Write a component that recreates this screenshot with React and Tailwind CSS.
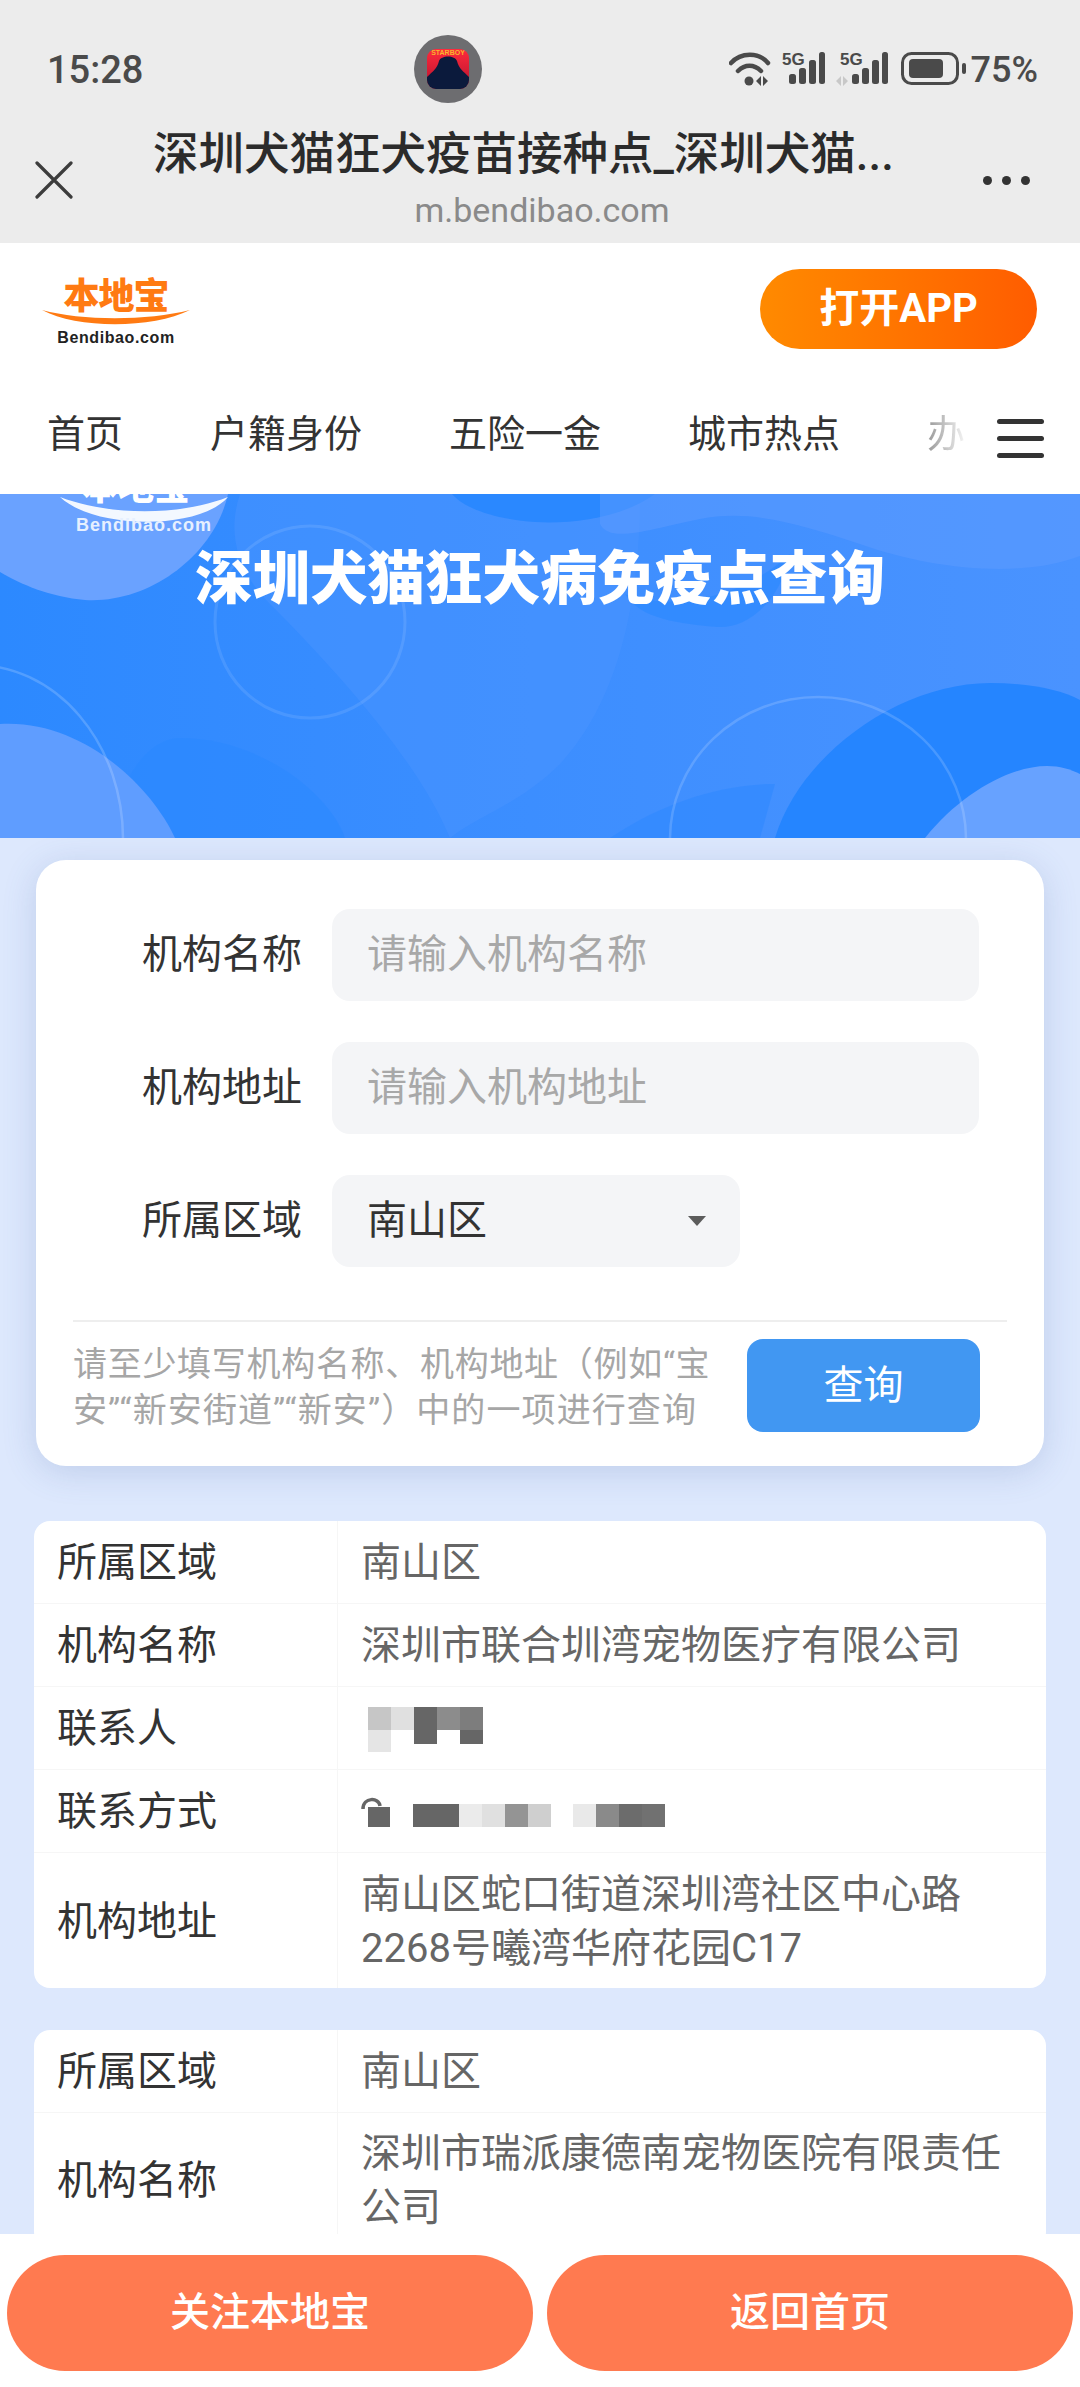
import React from "react";

function Signal({ x = 0 }) {
  return (
    <g transform={`translate(${x} 0)`}>
      <rect x="0" y="22" width="7" height="10" rx="2.500" />
      <rect x="10" y="16" width="7" height="16" rx="2.500" />
      <rect x="20" y="8" width="7" height="24" rx="2.500" />
      <rect x="30" y="0" width="6" height="32" rx="2.500" />
    </g>
  );
}

function StatusIcons() {
  return (
    <svg width="240" height="36" viewBox="0 0 240 36" fill="#4a4a4a">
      <g fill="none" stroke="#4a4a4a" strokeWidth="4.500" strokeLinecap="round">
        <path d="M2 11 C12 0 30 0 39 11" />
        <path d="M9 19 C16 12 25 12 32 19" />
      </g>
      <circle cx="20" cy="29" r="4.500" />
      <path d="M27 29 l5 -5 v10z M34 24 l5 5 l-5 5z" />
      <g transform="translate(60 0)"><Signal /></g>
      <g transform="translate(123 0)"><Signal /></g>
      <path d="M107 29 l5 -5 v10z M114 24 l5 5 l-5 5z" fill="#c8c8c8" />
      <rect x="173.500" y="1.500" width="55" height="30" rx="9" fill="none" stroke="#4a4a4a" strokeWidth="3" />
      <rect x="180" y="7" width="34" height="19" rx="4" />
      <rect x="233" y="11" width="4" height="11" rx="2" />
    </svg>
  );
}

function Row({ label, children, h = "h-[83px]", last }) {
  return (
    <div className={`flex ${h} ${last ? "" : "border-b border-[#f6f6f6]"}`}>
      <div className="flex w-[304px] shrink-0 items-center border-r border-[#f6f6f6] pl-[23px] pt-[2px] text-[40px] text-[#333]">
        {label}
      </div>
      <div className="flex min-w-0 flex-1 items-center pl-[23px] pr-[24px] pt-[2px] text-[40px] leading-[54px] text-[#666]">
        {children}
      </div>
    </div>
  );
}

function Cells({ items }) {
  return (
    <div className="flex items-start">
      {items.map((c, i) => (
        <div key={i} className="w-[23px]" style={{ height: c[1], background: c[0] }} />
      ))}
    </div>
  );
}

function Field({ label, children, w = "w-[647px]" }) {
  return (
    <div className="flex items-center">
      <div className="w-[266px] text-right text-[40px] text-[#333]">{label}</div>
      <div className={`ml-[30px] flex h-[92px] items-center rounded-[18px] bg-[#f4f5f7] px-[35px] text-[40px] ${w}`}>
        {children}
      </div>
    </div>
  );
}

function Banner() {
  return (
    <div className="relative h-[344px] overflow-hidden bg-gradient-to-r from-[#2c89ff] to-[#4a93ff]">
      <svg className="absolute inset-0" width="1080" height="344" viewBox="0 0 1080 344">
        <path d="M240 0 H640 C640 90 625 200 560 270 C520 310 480 320 450 344 C420 270 340 180 270 110 C230 70 230 30 240 0Z" fill="#4c94ff" opacity="0.45" />
        <path d="M0 0 H228 C215 60 150 110 85 106 C50 103 20 90 0 78Z" fill="#6aa2ff" />
        <path d="M452 0 H655 C620 25 570 30 535 28 C495 25 465 15 452 0Z" fill="#2a88ff" />
        <path d="M600 0 H1080 V62 C1020 85 930 75 860 50 C800 30 750 15 700 25 C650 35 610 50 600 30Z" fill="#5d9cff" opacity="0.5" />
        <path d="M625 100 C665 115 735 110 790 60 C780 110 745 135 718 133 C680 130 640 125 625 100Z" fill="#2a88ff" opacity="0.6" />
        <path d="M110 344 C120 280 150 244 180 244 C260 244 330 300 345 344Z" fill="#2a88ff" opacity="0.55" />
        <path d="M0 230 C80 225 150 290 175 344 H0Z" fill="#5f9dff" />
        <path d="M775 344 C800 260 900 189 990 189 C1025 189 1060 195 1080 206 V344Z" fill="#2585ff" />
        <path d="M610 344 C660 310 720 290 775 290 L760 344Z" fill="#2f89ff" opacity="0.6" />
        <path d="M925 344 C960 300 1010 272 1047 272 C1060 272 1070 275 1080 280 V344Z" fill="#67a2ff" />
        <ellipse cx="310" cy="128" rx="95" ry="96" fill="none" stroke="#ffffff" strokeOpacity="0.1" strokeWidth="3" />
        <ellipse cx="818" cy="345" rx="148" ry="142" fill="none" stroke="#ffffff" strokeOpacity="0.16" strokeWidth="2.500" />
        <ellipse cx="-25" cy="345" rx="148" ry="174" fill="none" stroke="#ffffff" strokeOpacity="0.18" strokeWidth="2.500" />
        <path d="M60 3 C110 22 180 22 228 3 C200 36 95 36 60 3Z" fill="#ffffff" opacity="0.92" />
      </svg>
      <div className="absolute left-[82px] top-[-26px] text-[36px] font-black leading-[40px] text-white">本地宝</div>
      <div className="absolute left-[76px] top-[21px] font-['Liberation_Sans'] text-[18px] font-bold leading-[20px] tracking-[1px] text-[#e6f0ff]">
        Bendibao.com
      </div>
      <div className="relative pt-[52px] text-center text-[57.500px] font-black leading-[68px] text-white">
        深圳犬猫狂犬病免疫点查询
      </div>
    </div>
  );
}

export default function App() {
  return (
    <div className="relative h-[2387px] w-[1080px] overflow-hidden bg-[#dde8fd] font-['Roboto','Noto_Sans_CJK_SC',sans-serif]">
      {/* system + browser chrome */}
      <div className="h-[243px] bg-[#ececec]">
        <div className="relative flex h-[128px] items-center justify-between pl-[47px] pr-[42px] pt-[12px]">
          <div className="text-[38px] font-medium text-[#4a4a4a]">15:28</div>
          <div className="absolute left-[414px] top-[35px] flex h-[68px] w-[68px] items-center justify-center rounded-full bg-[#6d6d70]">
            <div className="relative h-[40px] w-[42px] overflow-hidden rounded-[9px] bg-gradient-to-b from-[#ff2a3c] to-[#b3122e]">
              <svg className="absolute inset-0" width="42" height="40" viewBox="0 0 42 40">
                <path d="M0 40 V28 C6 22 10 20 12 12 C14 6 28 6 30 12 C32 20 36 22 42 28 V40Z" fill="#0b1a3c" />
              </svg>
              <div className="absolute left-0 top-0 w-full whitespace-nowrap text-center font-['Liberation_Sans'] text-[7px] font-bold leading-[8px] text-[#f7b52c]">
                STARBOY
              </div>
            </div>
          </div>
          <div className="flex items-center">
            <StatusIcons />
            <div className="ml-[2px] text-[36px] font-medium text-[#4a4a4a]">75%</div>
          </div>
          <div className="absolute left-[782px] top-[50px] font-['Liberation_Sans'] text-[17px] font-bold leading-[20px] text-[#4a4a4a]">5G</div>
          <div className="absolute left-[840px] top-[50px] font-['Liberation_Sans'] text-[17px] font-bold leading-[20px] text-[#4a4a4a]">5G</div>
        </div>
        <div className="flex items-center pl-[34px] pr-[50px]">
          <svg width="40" height="38" viewBox="0 0 40 38" fill="none" stroke="#3c3c3c" strokeWidth="3.200" strokeLinecap="round">
            <path d="M3 2 L37 36 M37 2 L3 36" />
          </svg>
          <div className="min-w-0 flex-1">
            <div className="whitespace-nowrap pl-[79px] text-[45.500px] font-medium leading-[54px] text-[#2b2b2b]">
              深圳犬猫狂犬疫苗接种点_深圳犬猫...
            </div>
            <div className="mt-[6px] pl-[27px] text-center text-[34px] leading-[44px] text-[#8a8a8a]">m.bendibao.com</div>
          </div>
          <div className="flex gap-[10px]">
            <div className="h-[9px] w-[9px] rounded-full bg-[#333]" />
            <div className="h-[9px] w-[9px] rounded-full bg-[#333]" />
            <div className="h-[9px] w-[9px] rounded-full bg-[#333]" />
          </div>
        </div>
      </div>

      {/* site header */}
      <div className="bg-white">
        <div className="flex h-[140px] items-center justify-between pl-[42px] pr-[43px] pt-[28px]">
          <div className="relative h-[72px] w-[148px] -translate-y-[13px]">
            <div className="text-center text-[36px] font-black leading-[38px] tracking-[-1px] text-[#ff7a12]">本地宝</div>
            <svg className="absolute left-0 top-[31px]" width="148" height="20" viewBox="0 0 148 20">
              <path d="M0 1 C40 12 105 12 148 1 C110 20 35 20 0 1Z" fill="#ff7a12" />
            </svg>
            <div className="absolute left-0 top-[51px] w-full text-center font-['Liberation_Sans'] text-[16px] font-bold leading-[18px] tracking-[0.6px] text-[#222]">
              Bendibao.com
            </div>
          </div>
          <div className="flex h-[80px] w-[277px] -translate-y-[18px] items-center justify-center rounded-full bg-gradient-to-r from-[#ff8a00] to-[#ff5c00] text-[40px] font-bold text-white">
            打开APP
          </div>
        </div>
        <div className="flex h-[111px] items-center pl-[47px] pr-[36px]">
          <div className="relative mb-[8px] flex flex-1 gap-[87px] whitespace-nowrap text-[38px] text-[#333]">
            <span>首页</span>
            <span>户籍身份</span>
            <span>五险一金</span>
            <span>城市热点</span>
            <span className="bg-gradient-to-r from-[#999] to-[#f4f4f4] bg-clip-text text-transparent">办</span>
          </div>
          <div className="ml-[10px] flex w-[47px] flex-col gap-[12px]">
            <div className="h-[5px] rounded-full bg-[#333]" />
            <div className="h-[5px] rounded-full bg-[#333]" />
            <div className="h-[5px] rounded-full bg-[#333]" />
          </div>
        </div>
      </div>

      <Banner />

      {/* search card */}
      <div className="px-[36px] pt-[22px]">
        <div className="h-[606px] rounded-[30px] bg-white pt-[49px] shadow-[0_6px_34px_rgba(70,100,160,0.2)]">
          <div className="flex flex-col gap-[41px]">
            <Field label="机构名称"><span className="text-[#a8a8a8]">请输入机构名称</span></Field>
            <Field label="机构地址"><span className="text-[#a8a8a8]">请输入机构地址</span></Field>
            <Field label="所属区域" w="w-[408px]">
              <span className="flex-1 text-[#333]">南山区</span>
              <svg width="20" height="12" viewBox="0 0 20 12" className="mr-[-2px]"><path d="M1 1 H19 L10 11Z" fill="#5c5c5c" /></svg>
            </Field>
          </div>
          <div className="mx-[37px] mt-[53px] h-[2px] bg-[#eeeeee]" />
          <div className="flex items-start pl-[37px] pr-[64px] pt-[17px]">
            <div className="w-[650px] whitespace-nowrap pt-[2px] text-[34px] leading-[46px] tracking-[0.7px] text-[#a6a6a6]">
              请至少填写机构名称、机构地址（例如“宝<br /><span className="tracking-[1.100px]">安”“新安街道”“新安”）中的一项进行查询</span>
            </div>
            <div className="ml-auto flex h-[93px] w-[233px] items-center justify-center rounded-[16px] bg-[#4197f2] text-[40px] text-white">
              查询
            </div>
          </div>
        </div>
      </div>

      {/* result tables */}
      <div className="flex flex-col gap-[42px] px-[34px] pt-[55px]">
        <div className="overflow-hidden rounded-[16px] bg-white">
          <Row label="所属区域">南山区</Row>
          <Row label="机构名称">深圳市联合圳湾宠物医疗有限公司</Row>
          <Row label="联系人">
            <div className="ml-[7px] flex flex-col">
              <Cells items={[["#c6c6c6", 23], ["#e0e0e0", 23], ["#666666", 23], ["#8c8c8c", 23], ["#7d7d7d", 23]]} />
              <Cells items={[["#e5e5e5", 22], ["#ffffff", 14], ["#666666", 14], ["#ffffff", 14], ["#666666", 14]]} />
            </div>
          </Row>
          <Row label="联系方式">
            <div className="flex items-end">
              <svg width="30" height="30" viewBox="0 0 30 30">
                <path d="M2 12 C2 0 18 0 19 9" fill="none" stroke="#666666" strokeWidth="3.500" />
                <rect x="7" y="10" width="22" height="20" fill="#666666" />
              </svg>
              <div className="ml-[22px]">
                <Cells items={[["#666666", 23], ["#666666", 23], ["#ebebeb", 23], ["#e0e0e0", 23], ["#949494", 23], ["#cfcfcf", 23]]} />
              </div>
              <div className="ml-[22px]">
                <Cells items={[["#e9e9e9", 23], ["#8a8a8a", 23], ["#6c6c6c", 23], ["#717171", 23]]} />
              </div>
            </div>
          </Row>
          <Row label="机构地址" h="h-[135px]" last>
            <div>南山区蛇口街道深圳湾社区中心路<br />2268号曦湾华府花园C17</div>
          </Row>
        </div>
        <div className="overflow-hidden rounded-[16px] bg-white">
          <Row label="所属区域">南山区</Row>
          <Row label="机构名称" h="h-[135px]">
            <div>深圳市瑞派康德南宠物医院有限责任公司</div>
          </Row>
        </div>
      </div>

      {/* bottom bar */}
      <div className="absolute bottom-0 left-0 flex h-[153px] w-full gap-[14px] bg-white px-[7px] pt-[21px]">
        <div className="flex h-[116px] flex-1 items-center justify-center rounded-full bg-[#ff7a50] text-[40px] font-medium text-white">关注本地宝</div>
        <div className="flex h-[116px] flex-1 items-center justify-center rounded-full bg-[#ff7a50] text-[40px] font-medium text-white">返回首页</div>
      </div>
    </div>
  );
}
